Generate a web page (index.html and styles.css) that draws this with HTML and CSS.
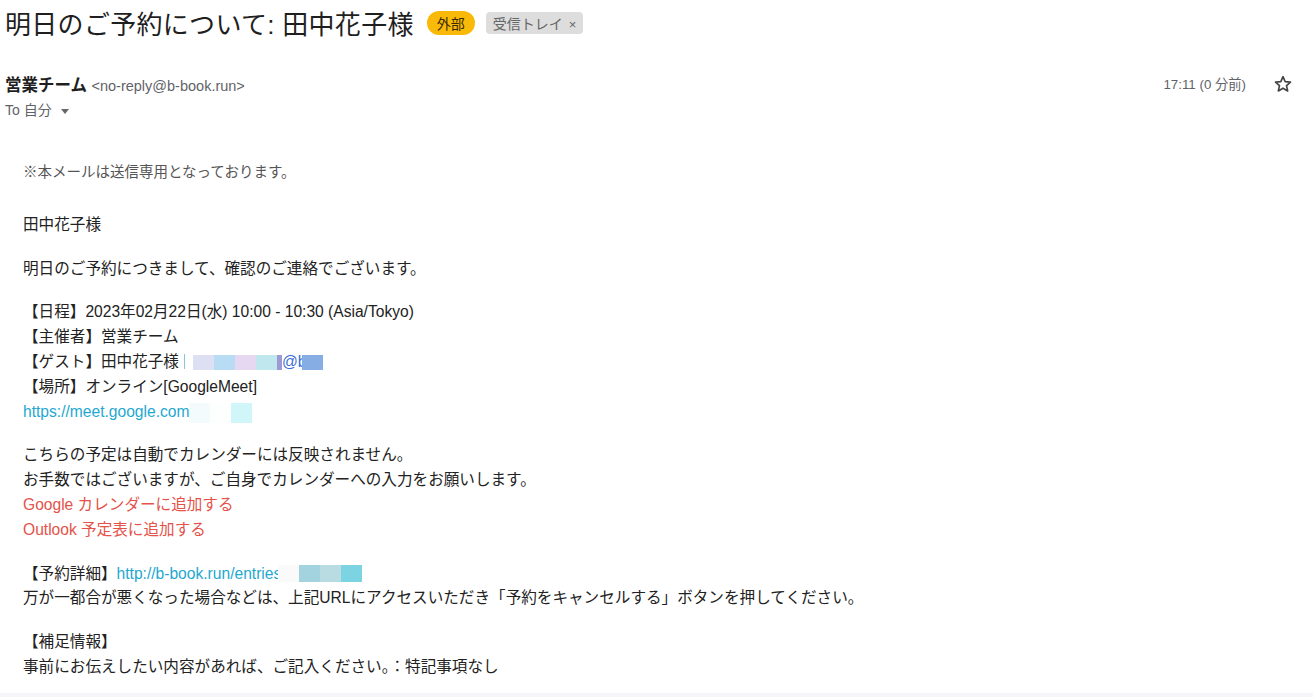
FILE: index.html
```html
<!DOCTYPE html>
<html lang="ja">
<head>
<meta charset="utf-8">
<title>明日のご予約について: 田中花子様</title>
<link rel="stylesheet" href="styles.css">
</head>
<body>
  <div class="mail">
    <div class="subject">
      <h1>明日のご予約について: 田中花子様</h1>
      <span class="tag-ext">外部</span>
      <span class="tag-label">受信トレイ <span class="x">×</span></span>
    </div>

    <div class="meta">
      <div class="from">
        <div><span class="name">営業チーム</span> <span class="addr">&lt;no-reply@b-book.run&gt;</span></div>
        <div class="to">To 自分 <span class="caret"></span></div>
      </div>
      <div class="when">
        <span class="time">17:11 (0 分前)</span>
        <svg class="star" width="20" height="20" viewBox="0 0 24 24">
          <path d="M12 3.2l2.6 5.9 6.4.6-4.8 4.3 1.4 6.3L12 17l-5.6 3.3 1.4-6.3L3 9.7l6.4-.6z" fill="none" stroke="#444" stroke-width="2" stroke-linejoin="round"/>
        </svg>
      </div>
    </div>

    <div class="body">
      <p class="note">※本メールは送信専用となっております。</p>

      <p>田中花子様</p>

      <p>明日のご予約につきまして、確認のご連絡でございます。</p>

      <p>
        【日程】2023年02月22日(水) 10:00 - 10:30 (Asia/Tokyo)<br>
        【主催者】営業チーム<br>
        【ゲスト】田中花子様<span class="cursor"></span><span class="mask guest"><i style="background:#dde0f2"></i><i style="background:#b7dcf4"></i><i style="background:#e6d8f0"></i><i style="background:#c0e6ee"></i><i class="thin" style="background:#9c9ad4"></i></span><span class="blue">@b</span><span class="mask guest tail"><i style="background:#86aee4"></i></span><br>
        【場所】オンライン[GoogleMeet]<br>
        <a class="link" href="#">https://meet.google.com</a><span class="mask meet"><i style="background:#f4fbfc"></i><i style="background:#fdffff"></i><i style="background:#d0f6fa"></i><i style="background:#fff"></i></span>
      </p>

      <p>
        こちらの予定は自動でカレンダーには反映されません。<br>
        お手数ではございますが、ご自身でカレンダーへの入力をお願いします。<br>
        <a class="red" href="#">Google カレンダーに追加する</a><br>
        <a class="red" href="#">Outlook 予定表に追加する</a>
      </p>

      <p>
        【予約詳細】<a class="link" href="#">http://b-book.run/entries</a><span class="mask entry"><i style="background:#fafafa"></i><i style="background:#a2d3df"></i><i style="background:#b8dce2"></i><i style="background:#7cd4e2"></i></span><br>
        万が一都合が悪くなった場合などは、上記URLにアクセスいただき「予約をキャンセルする」ボタンを押してください。
      </p>

      <p>
        【補足情報】<br>
        事前にお伝えしたい内容があれば、ご記入ください。：特記事項なし
      </p>
    </div>
  </div>
  <div class="footer-strip"></div>
</body>
</html>
```

FILE: styles.css
```css
body {
    margin: 0;
    font-family: "Liberation Sans", "Noto Sans CJK JP", sans-serif;
    color: #222;
    background: #fff;
    height: 697px;
    overflow: hidden;
    position: relative;
}

.mail {
    padding: 0 20px 0 5px;
}

.subject {
    display: flex;
    align-items: center;
    gap: 11px;
    height: 45px;
}

.subject h1 {
    margin: 0 2px 0 0;
    font-size: 26px;
    font-weight: normal;
    color: #1f1f1f;
    letter-spacing: 0.3px;
}

.tag-ext {
    background: #f9b908;
    color: #3a2a00;
    font-size: 14px;
    padding: 2px 10px;
    border-radius: 12px;
}

.tag-label {
    background: #dddddd;
    color: #666;
    font-size: 14px;
    padding: 1px 7px;
    border-radius: 4px;
}

.tag-label .x {
    font-size: 13px;
    margin-left: 2px;
}

.meta {
    display: flex;
    justify-content: space-between;
    margin-top: 27px;
}

.from .name {
    font-size: 16.5px;
    font-weight: bold;
    color: #1f1f1f;
}

.from .addr {
    font-size: 14.5px;
    color: #5f6368;
}

.to {
    font-size: 14px;
    color: #5f6368;
    margin-top: 3px;
}

.caret {
    display: inline-block;
    width: 0;
    height: 0;
    border-left: 4px solid transparent;
    border-right: 4px solid transparent;
    border-top: 5px solid #666;
    margin-left: 5px;
    vertical-align: middle;
}

.when {
    display: flex;
    align-items: flex-start;
    gap: 27px;
}

.time {
    font-size: 13.3px;
    color: #5f6368;
    margin-top: 2px;
}

.star {
    margin-top: 2px;
}

.body {
    padding: 41px 0 0 18px;
    font-size: 15.6px;
    line-height: 24.8px;
}

.body p {
    margin: 0 0 19px;
}

.body p.note {
    font-size: 14.5px;
    color: #555;
    margin-bottom: 28px;
}

.link {
    color: #1fa8d0;
    text-decoration: none;
}

.red {
    color: #e4524a;
    text-decoration: none;
}

.blue {
    color: #3a6fd8;
}

.cursor {
    display: inline-block;
    width: 1px;
    height: 15px;
    background: #8cc4e8;
    margin: 0 8px 0 5px;
    vertical-align: -2px;
}

.mask {
    display: inline-flex;
    vertical-align: -3px;
}

.mask i {
    display: block;
    width: 21px;
    height: 15px;
}

.mask i.thin {
    width: 5px;
}

.tail {
    margin-left: -4px;
}

.meet i {
    height: 20px;
}

.meet {
    vertical-align: -6px;
}

.entry {
    margin-left: -3px;
}

.entry i {
    height: 17px;
}

.footer-strip {
    position: absolute;
    left: 0;
    right: 0;
    bottom: 0;
    height: 4px;
    background: #f6f6fa;
}
```
